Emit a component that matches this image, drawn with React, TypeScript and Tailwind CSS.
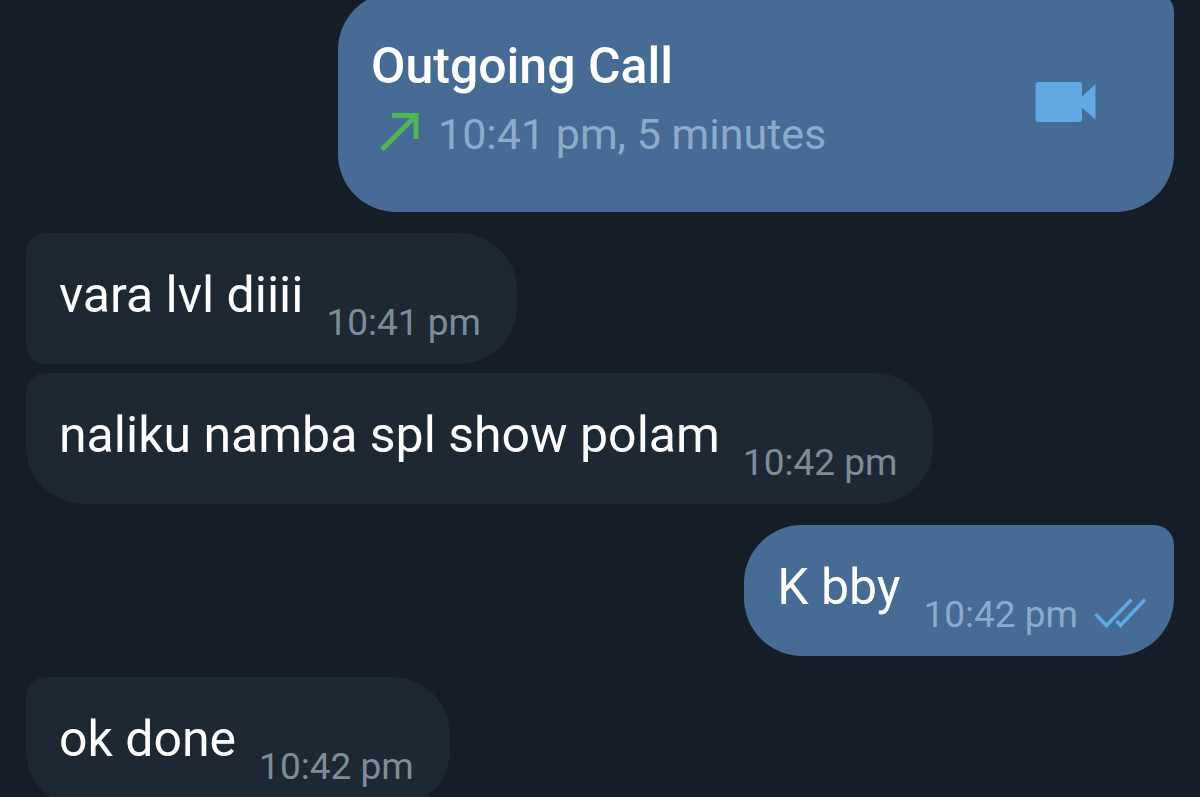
import clsx from "clsx";

interface Message {
  id: number;
  text: string;
  time: string;
  outgoing?: boolean;
  joined?: boolean;
  shape: string;
}

const MESSAGES: Message[] = [
  { id: 1, text: "vara lvl diiii", time: "10:41 pm", shape: "rounded-l-[20px] rounded-r-[58px]" },
  { id: 2, text: "naliku namba spl show polam", time: "10:42 pm", joined: true, shape: "rounded-[58px] rounded-tl-[20px]" },
  { id: 3, text: "K bby", time: "10:42 pm", outgoing: true, shape: "rounded-[58px] rounded-tr-[20px]" },
  { id: 4, text: "ok done", time: "10:42 pm", shape: "rounded-[58px] rounded-tl-[20px]" },
];

function OutgoingArrow() {
  return (
    <svg className="h-[46px] w-[40px]" viewBox="0 0 40 46" fill="none" stroke="#4fb656" strokeWidth="5" aria-hidden="true">
      <path d="M13 4.5H37V28" />
      <path d="M3 38.5L36.5 5" />
    </svg>
  );
}

function VideoIcon() {
  return (
    <svg className="h-[42px] w-[61px]" viewBox="0 0 61 42" fill="#62a8e3" aria-hidden="true">
      <rect x="0.5" y="1" width="46.5" height="40" rx="3" />
      <path d="M46 16.5L60.5 3V38.5L46 26Z" />
    </svg>
  );
}

function ReadTicks() {
  return (
    <svg className="h-[34px] w-[52px]" viewBox="0 0 52 34" fill="none" stroke="#5dabe5" strokeWidth="3.4" aria-hidden="true">
      <path d="M1.5 16L12.5 27.5L37.5 1.5" />
      <path d="M22.5 23L26.5 27.5L51 1.5" />
    </svg>
  );
}

function CallBubble() {
  return (
    <button
      type="button"
      className="flex w-[836px] max-w-full items-center justify-between self-end rounded-[58px] rounded-tr-[20px] bg-[#466b94] pr-[78px] pl-[33px] text-left"
    >
      <span className="flex flex-col gap-3 pt-11 pb-[52px]">
        <span className="text-[50px] leading-[60px] font-medium">Outgoing Call</span>
        <span className="flex items-center gap-[19px] pl-2 text-[43px] leading-[52px] text-[#8babcb]">
          <OutgoingArrow />
          10:41 pm, 5 minutes
        </span>
      </span>
      <VideoIcon />
    </button>
  );
}

function MessageBubble({ message }: { message: Message }) {
  const { text, time, outgoing, joined, shape } = message;
  return (
    <div
      className={clsx(
        "flex items-end gap-[23px] pt-8 pb-[19px] pl-[33px]",
        shape,
        joined ? "mt-[9px]" : "mt-[21px]",
        outgoing ? "self-end bg-[#466b94] pr-7" : "self-start bg-[#1e2833] pr-9"
      )}
    >
      <p className="mb-5 text-[50px] leading-[60px]">{text}</p>
      <div
        className={clsx(
          "flex items-center gap-4 text-[37px] leading-[44px] whitespace-nowrap",
          outgoing ? "text-[#8babcb]" : "text-[#7c8d99]"
        )}
      >
        <time>{time}</time>
        {outgoing && <ReadTicks />}
      </div>
    </div>
  );
}

export default function App() {
  return (
    <main className="h-screen overflow-hidden bg-[#151e26] font-['Roboto',sans-serif] text-white">
      <div className="-mt-2 flex flex-col px-[26px]">
        <CallBubble />
        {MESSAGES.map((message) => (
          <MessageBubble key={message.id} message={message} />
        ))}
      </div>
    </main>
  );
}
